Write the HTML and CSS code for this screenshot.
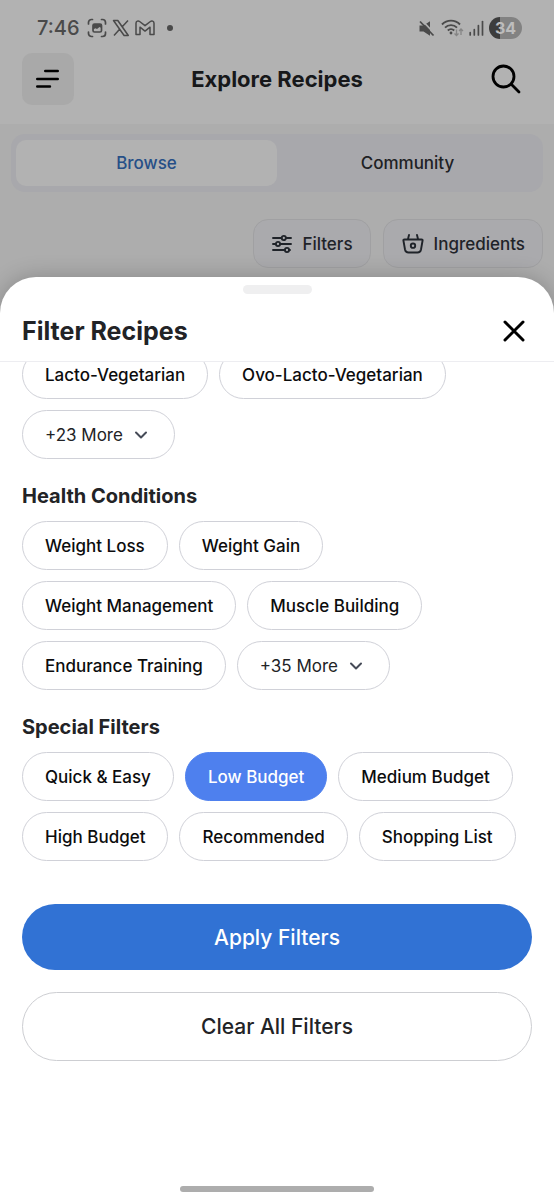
FILE: index.html
```html
<!DOCTYPE html>
<html lang="en">
<head>
<meta charset="utf-8">
<meta name="viewport" content="width=device-width, initial-scale=1">
<title>Explore Recipes</title>
<link rel="stylesheet" href="styles.css">
</head>
<body>
<div class="screen">
  <div class="app-top">
    <div class="status-bar">
      <div class="status-group">
        <span class="clock">7:46</span>
        <svg width="20" height="20" viewBox="0 0 20 20" fill="none" stroke="currentColor" stroke-width="1.7" stroke-linecap="round"><path d="M1.500 6V4.500A3 3 0 0 1 4.500 1.500H5.500M14.500 1.500h1a3 3 0 0 1 3 3V6M18.500 14v1.500a3 3 0 0 1-3 3h-1M5.500 18.500h-1a3 3 0 0 1-3-3V14"/><rect x="6" y="6" width="8.500" height="8" rx="1.500"/><path d="M6 6h8.500v4l-2-1-2.500 2-1.500-.8L6 11.500z" fill="currentColor" stroke="none"/></svg>
        <svg width="18" height="18" viewBox="0 0 18 18" fill="none" stroke="currentColor" stroke-width="1.500" stroke-linejoin="round"><path d="M1.500 1.500h4.300l10.500 15h-4.200zM16 1.500l-6.200 6.700M7.600 10.300L2 16.500"/></svg>
        <svg width="20" height="16" viewBox="0 0 20 16" fill="none" stroke="currentColor" stroke-width="1.500" stroke-linejoin="round"><path d="M1 3.200C1 1 3.300.5 4.600 1.500L10 5.700l5.400-4.200C16.700.5 19 1 19 3.200V14.500h-4V7.200l-5 3.900-5-3.900v7.300H1z"/></svg>
        <span class="dot"></span>
      </div>
      <div class="status-group">
        <svg width="18" height="17" viewBox="0 0 18 17" fill="currentColor"><path d="M1.500 5.500h4L12 1.200v14.600L5.500 11.500h-4z"/><path d="M4 .5l13 13.500" stroke="#b2b2b2" stroke-width="1.800"/><path d="M2 1.500l13.500 14" stroke="currentColor" stroke-width="1.800"/></svg>
        <svg width="23" height="18" viewBox="0 0 23 18" fill="none" stroke="currentColor" stroke-width="1.900"><path d="M1 5.500a12.500 12.500 0 0 1 18 0M4 8.600a8.500 8.500 0 0 1 12 0M6.800 11.500a4.700 4.700 0 0 1 6.400 0"/><circle cx="10" cy="14" r="1.400" fill="currentColor" stroke="none"/><path d="M15.500 10.500v6M13.500 14.500l2 2 2-2M20 16v-6M18 12l2-2 2 2" stroke="#858585" stroke-width="1.300"/></svg>
        <svg width="15" height="16" viewBox="0 0 15 16" fill="none" stroke="currentColor" stroke-width="1.700" stroke-linecap="round"><path d="M1.200 12.500V15M5.300 9.500V15M9.400 5.500V15"/><path d="M13.500 1.500V15"/></svg>
        <span class="battery">34</span>
      </div>
    </div>
    <header class="top-bar">
      <button class="menu-button" type="button" aria-label="Menu"><svg width="26" height="22" viewBox="0 0 26 22" stroke="#000" stroke-width="2.600" stroke-linecap="round"><path d="M10.300 3h12.400M2.300 11h20.400M2.300 18.500h12.600"/></svg></button>
      <h1 class="page-title">Explore Recipes</h1>
      <button class="search-button" type="button" aria-label="Search"><svg width="32" height="32" viewBox="0 0 32 32" fill="none" stroke="#000" stroke-width="2.800" stroke-linecap="round"><circle cx="13.500" cy="13.500" r="10.500"/><path d="M21.300 21.300L29 29"/></svg></button>
    </header>
  </div>
  <div class="tabs" role="tablist">
    <button class="tab tab-active" type="button" role="tab" aria-selected="true">Browse</button>
    <button class="tab" type="button" role="tab" aria-selected="false">Community</button>
  </div>
  <div class="tools">
    <button class="tool" type="button"><svg width="20" height="20" viewBox="0 0 20 20" fill="none" stroke="currentColor" stroke-width="1.900" stroke-linecap="round"><path d="M1 4h8.500M14 4h5M1 10h2.500M8.500 10H19M1 16h11M17 16h1"/><circle cx="11.800" cy="4" r="2.100"/><circle cx="6" cy="10" r="2.100"/><circle cx="15" cy="16" r="2.100"/></svg>Filters</button>
    <button class="tool" type="button"><svg width="22" height="20" viewBox="0 0 22 20" fill="none" stroke="currentColor" stroke-width="1.900" stroke-linecap="round" stroke-linejoin="round"><path d="M7 1L6 5M15 1l1 4M2.500 5.500h17q1.500 0 1 1.500L19 15.500q-.6 3-3.500 3h-9q-2.900 0-3.500-3L1.500 7q-.5-1.500 1-1.500z"/><circle cx="11" cy="11.700" r="2.200"/></svg>Ingredients</button>
  </div>
  <section class="sheet" role="dialog" aria-labelledby="sheet-title">
    <div class="handle"></div>
    <header class="sheet-header">
      <h2 class="sheet-title" id="sheet-title">Filter Recipes</h2>
      <button class="close" type="button" aria-label="Close"><svg width="24" height="24" viewBox="0 0 24 24" stroke="#000" stroke-width="3" stroke-linecap="round"><path d="M3 3l18 18M21 3L3 21"/></svg></button>
    </header>
    <div class="sheet-body">
      <div class="chips chips-scrolled">
        <button class="chip" type="button">Lacto-Vegetarian</button>
        <button class="chip" type="button">Ovo-Lacto-Vegetarian</button>
        <button class="chip chip-more" type="button">+23 More<svg width="14" height="10" viewBox="0 0 14 10" fill="none" stroke="currentColor" stroke-width="2" stroke-linecap="round" stroke-linejoin="round"><path d="M2 2.500l5 5 5-5"/></svg></button>
      </div>
      <h3 class="group-title">Health Conditions</h3>
      <div class="chips">
        <button class="chip" type="button">Weight Loss</button>
        <button class="chip" type="button">Weight Gain</button>
        <button class="chip" type="button">Weight Management</button>
        <button class="chip" type="button">Muscle Building</button>
        <button class="chip" type="button">Endurance Training</button>
        <button class="chip chip-more" type="button">+35 More<svg width="14" height="10" viewBox="0 0 14 10" fill="none" stroke="currentColor" stroke-width="2" stroke-linecap="round" stroke-linejoin="round"><path d="M2 2.500l5 5 5-5"/></svg></button>
      </div>
      <h3 class="group-title">Special Filters</h3>
      <div class="chips">
        <button class="chip" type="button">Quick &amp; Easy</button>
        <button class="chip chip-selected" type="button" aria-pressed="true">Low Budget</button>
        <button class="chip" type="button">Medium Budget</button>
        <button class="chip" type="button">High Budget</button>
        <button class="chip" type="button">Recommended</button>
        <button class="chip" type="button">Shopping List</button>
      </div>
      <div class="actions">
        <button class="action action-primary" type="button">Apply Filters</button>
        <button class="action" type="button">Clear All Filters</button>
      </div>
    </div>
    <div class="home-indicator"></div>
  </section>
</div>
</body>
</html>
```

FILE: styles.css
```css
* {
  box-sizing: border-box;
}

body {
  margin: 0;
  background: #adadad;
  color: #222326;
  font-family: Inter, "Open Sans", sans-serif;
}

button {
  margin: 0;
  padding: 0;
  border: 0;
  background: none;
  color: inherit;
  font: inherit;
  cursor: pointer;
}

h1,
h2,
h3 {
  margin: 0;
  font-weight: 700;
}

svg {
  display: block;
  flex: none;
}

.screen {
  display: flex;
  flex-direction: column;
  min-height: 100vh;
}

.app-top {
  background: #b2b2b2;
}

.status-bar {
  display: flex;
  align-items: center;
  justify-content: space-between;
  padding: 16px 32px 0 37px;
  color: #4a4a4a;
}

.status-group {
  display: flex;
  align-items: center;
  gap: 5px;
  height: 24px;
}

.clock {
  margin-right: 2px;
  font-size: 20px;
  font-weight: 500;
  line-height: 24px;
}

.dot {
  width: 6px;
  height: 6px;
  margin-left: 7px;
  border-radius: 50%;
  background: #4a4a4a;
}

.battery {
  width: 33px;
  height: 22px;
  border-radius: 11px;
  background: linear-gradient(90deg, #3c3c3c 34%, #828282 34%);
  color: #bdbdbd;
  font-size: 16px;
  font-weight: 700;
  line-height: 22px;
  text-align: center;
}

.top-bar {
  display: flex;
  align-items: center;
  justify-content: space-between;
  padding: 13px 22px 19px;
}

.menu-button,
.search-button {
  display: grid;
  place-items: center;
  width: 52px;
  height: 52px;
  border-radius: 10px;
}

.menu-button {
  background: #a9a9a9;
}

.search-button {
  justify-items: end;
  padding-right: 10px;
}

.page-title {
  color: #17181a;
  font-size: 22px;
  line-height: 28px;
}

.tabs {
  display: grid;
  grid-template-columns: 1fr 1fr;
  margin: 10px 11px 0;
  padding: 6px 5px;
  border-radius: 14px;
  background: #a8a8ac;
}

.tab {
  height: 46px;
  border-radius: 10px;
  color: #202124;
  font-size: 17px;
  font-weight: 500;
}

.tab-active {
  background: #b2b2b2;
  color: #264f87;
}

.tools {
  display: flex;
  justify-content: flex-end;
  gap: 12px;
  padding: 27px 11px 9px;
}

.tool {
  display: flex;
  align-items: center;
  gap: 10px;
  height: 49px;
  padding: 0 17px 0 18px;
  border: 1px solid #a0a0a2;
  border-radius: 15px;
  background: #aaaaad;
  color: #1f2329;
  font-size: 17px;
  font-weight: 500;
}

.sheet {
  display: flex;
  flex: 1;
  flex-direction: column;
  padding-top: 8px;
  border-radius: 36px 36px 0 0;
  background: #fff;
  box-shadow: 0 0 22px rgba(0, 0, 0, 0.22);
}

.handle {
  align-self: center;
  width: 69px;
  height: 9px;
  border-radius: 5px;
  background: #efeff0;
}

.sheet-header {
  display: flex;
  align-items: center;
  justify-content: space-between;
  height: 68px;
  padding: 6px 28px 0 22px;
  border-bottom: 1px solid #ededf1;
}

.sheet-title {
  font-size: 25px;
  line-height: 32px;
}

.sheet-body {
  padding: 0 22px;
  overflow: hidden;
}

.chips {
  display: flex;
  flex-wrap: wrap;
  gap: 11px;
}

/* The list rests part-way through its first row of options. */
.chips-scrolled {
  margin-top: -12px;
}

.chip {
  display: flex;
  align-items: center;
  gap: 11px;
  height: 49px;
  padding: 0 22px;
  border: 1px solid #d0d1d8;
  border-radius: 25px;
  color: #0c0c0d;
  font-size: 17px;
  font-weight: 500;
  white-space: nowrap;
}

.chip-more {
  padding-right: 26px;
  color: #222326;
  font-weight: 400;
}

.chip-more svg {
  color: #464b57;
}

.chip-selected {
  border-color: #4e80ee;
  background: #4e80ee;
  color: #fff;
}

.group-title {
  margin: 25px 0 13px;
  font-size: 20px;
  line-height: 24px;
}

.actions {
  display: grid;
  gap: 22px;
  margin-top: 43px;
}

.action {
  height: 69px;
  border: 1px solid #cdced2;
  border-radius: 35px;
  font-size: 21px;
  font-weight: 500;
}

.action-primary {
  height: 66px;
  border: 0;
  background: #3172d4;
  color: #fff;
}

.home-indicator {
  align-self: center;
  width: 194px;
  height: 6px;
  margin-top: auto;
  margin-bottom: 8px;
  border-radius: 3px;
  background: #adadad;
}
```
